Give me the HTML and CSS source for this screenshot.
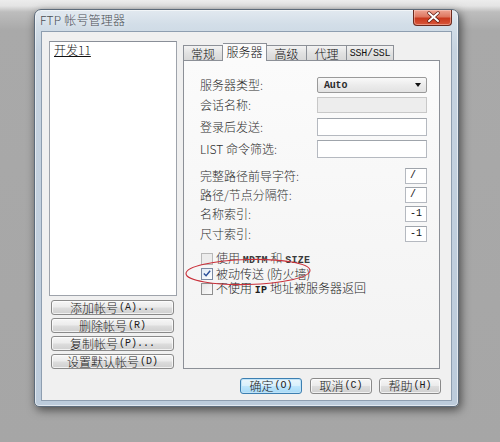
FILE: index.html
```html
<!DOCTYPE html>
<html lang="zh">
<head>
<meta charset="utf-8">
<title>FTP 帐号管理器</title>
<link rel="stylesheet" href="styles.css">
</head>
<body>
<div class="screen">
  <div class="window">
    <div class="titlebar">
      <span class="title">FTP 帐号管理器</span>
      <div class="close">
        <svg width="39" height="16" viewBox="0 0 39 16">
          <path d="M15 4 L24 12 M24 4 L15 12" stroke="#5a1a10" stroke-width="3.4" stroke-linecap="round"/>
          <path d="M15 4 L24 12 M24 4 L15 12" stroke="#ffffff" stroke-width="2" stroke-linecap="round"/>
        </svg>
      </div>
    </div>
    <div class="client">
      <div class="main">
        <div class="leftcol">
          <div class="listbox">
            <div class="item">开发11</div>
          </div>
          <div class="acct-btns">
            <div class="btn acct">添加帐号<span class="acc">(A)...</span></div>
            <div class="btn acct">删除帐号<span class="acc">(R)</span></div>
            <div class="btn acct">复制帐号<span class="acc">(P)...</span></div>
            <div class="btn acct">设置默认帐号<span class="acc">(D)</span></div>
          </div>
        </div>
        <div class="tabctl">
          <div class="tabs">
            <div class="tab t1">常规</div>
            <div class="tab sel">服务器</div>
            <div class="tab t3">高级</div>
            <div class="tab t4">代理</div>
            <div class="tab t5"><span class="mono">SSH/SSL</span></div>
          </div>
          <div class="panel">
            <div class="row first">
              <span class="lbl">服务器类型:</span>
              <div class="select"><span class="mono bold">Auto</span><span class="arrow"></span></div>
            </div>
            <div class="row r2">
              <span class="lbl">会话名称:</span>
              <div class="input disabled"></div>
            </div>
            <div class="row r3">
              <span class="lbl">登录后发送:</span>
              <div class="input tall"></div>
            </div>
            <div class="row r4">
              <span class="lbl">LIST 命令筛选:</span>
              <div class="input tall"></div>
            </div>
            <div class="row small s1">
              <span class="lbl">完整路径前导字符:</span>
              <div class="input mini">/</div>
            </div>
            <div class="row small s2">
              <span class="lbl">路径/节点分隔符:</span>
              <div class="input mini">/</div>
            </div>
            <div class="row small s3">
              <span class="lbl">名称索引:</span>
              <div class="input mini">-1</div>
            </div>
            <div class="row small s4">
              <span class="lbl">尺寸索引:</span>
              <div class="input mini">-1</div>
            </div>
            <div class="checks">
              <div class="check disabled"><span class="box"></span><span class="ctext">使用 <span class="cmono">MDTM</span> 和 <span class="cmono">SIZE</span></span></div>
              <div class="check"><span class="box checked">
                <svg width="11" height="11" viewBox="0 0 11 11"><path d="M2 5.5 L4.5 8 L9 2.5" stroke="#2b4f9a" stroke-width="1.6" fill="none"/></svg>
              </span><span class="ctext">被动传送 (防火墙)</span></div>
              <div class="check"><span class="box"></span><span class="ctext">不使用 <span class="cmono">IP</span> 地址被服务器返回</span></div>
            </div>
            <svg class="mark" width="255" height="307" viewBox="0 0 255 307">
              <ellipse cx="64" cy="211" rx="62" ry="12.5" fill="none" stroke="#c9303a" stroke-width="1.1" transform="rotate(-1.5 64 211)"/>
            </svg>
          </div>
        </div>
      </div>
      <div class="footer">
        <div class="btn foot default">确定<span class="acc">(O)</span></div>
        <div class="btn foot">取消<span class="acc">(C)</span></div>
        <div class="btn foot">帮助<span class="acc">(H)</span></div>
      </div>
    </div>
  </div>
</div>
</body>
</html>
```

FILE: styles.css
```css
html, body {
  margin: 0;
  padding: 0;
}
body {
  width: 500px;
  height: 442px;
  overflow: hidden;
  background: linear-gradient(#ececec 0px, #e4e4e4 6px, #bdbdbd 12px, #a9a9a9 30px, #a6a6a6 100%);
  font-family: "Noto Sans CJK SC", "Liberation Sans", sans-serif;
  font-size: 12px;
  font-weight: 300;
  color: #2a2a2a;
}
.screen {
  padding: 9px 0 0 34px;
}
.window {
  box-sizing: border-box;
  width: 425px;
  height: 398px;
  border: 1px solid #5d6b7a;
  border-radius: 7px 7px 5px 5px;
  background: linear-gradient(#e2e9f0 0px, #d3dee8 14px, #c6d3e0 40px, #bccbdb 100%);
  box-shadow: 2px 3px 10px rgba(0, 0, 0, 0.55), inset 0 0 0 1px rgba(255, 255, 255, 0.55);
  padding: 0 7px 6px 7px;
  display: flex;
  flex-direction: column;
}
.titlebar {
  height: 22px;
  margin: 0 -1px 0 -2px;
  display: flex;
  justify-content: space-between;
  align-items: flex-start;
}
.title {
  line-height: 20px;
  color: #4a4e55;
  font-size: 12px;
  text-shadow: 0 0 6px rgba(255, 255, 255, 0.9);
  letter-spacing: 0.2px;
}
.close {
  width: 39px;
  height: 16px;
  box-sizing: border-box;
  border: 1px solid #6b2a1e;
  border-top: none;
  border-radius: 0 0 4px 4px;
  background: linear-gradient(#efa594 0%, #de7760 45%, #c9391e 55%, #d9573a 100%);
  box-shadow: inset 0 0 0 1px rgba(255, 220, 210, 0.45);
}
.close svg {
  display: block;
  margin-top: -1px;
}
.client {
  height: 368px;
  background: #f0f0f0;
  box-shadow: 0 0 0 1px #8e9eb0;
  display: flex;
  flex-direction: column;
}
.main {
  display: flex;
  gap: 6px;
  padding: 9px 11px 0 7px;
}
.leftcol {
  width: 128px;
  display: flex;
  flex-direction: column;
}
.listbox {
  box-sizing: border-box;
  height: 255px;
  background: #ffffff;
  border: 1px solid #9ea3ab;
  border-top-color: #8a8f98;
  padding: 1px 4px;
}
.item {
  line-height: 14px;
  text-decoration: underline;
  text-decoration-thickness: 1px;
  text-underline-offset: 1px;
  color: #111;
}
.acct-btns {
  margin-top: 4px;
  padding: 0 3px 0 2px;
  display: flex;
  flex-direction: column;
  gap: 3px;
}
.btn {
  box-sizing: border-box;
  border: 1px solid #8a8a8a;
  border-radius: 3px;
  background: linear-gradient(#f6f6f6 0%, #ebebeb 48%, #dddddd 52%, #cfcfcf 100%);
  box-shadow: inset 0 0 0 1px rgba(255, 255, 255, 0.7);
  display: flex;
  align-items: center;
  justify-content: center;
  color: #1a1a1a;
  font-size: 12px;
}
.acct {
  height: 15px;
  line-height: 13px;
}
.acc {
  font-family: "Liberation Mono", monospace;
  font-size: 10px;
  margin-left: 1px;
}
.tabctl {
  width: 257px;
  display: flex;
  flex-direction: column;
}
.tabs {
  margin-top: 2px;
  height: 17px;
  display: flex;
  align-items: flex-end;
  position: relative;
  z-index: 2;
}
.tab {
  box-sizing: border-box;
  height: 15px;
  border: 1px solid #8c9097;
  border-bottom: none;
  border-left: none;
  background: linear-gradient(#f3f3f3, #e2e2e2 50%, #d8d8d8);
  display: flex;
  align-items: center;
  justify-content: center;
  line-height: 13px;
  color: #111;
}
.t1 {
  width: 40px;
  border-left: 1px solid #8c9097;
}
.sel {
  width: 44px;
  height: 18px;
  margin-bottom: -1px;
  background: #fbfbfb;
  border-left: none;
  padding-bottom: 2px;
}
.t3, .t4 {
  width: 40px;
}
.t5 {
  width: 47px;
}
.mono {
  font-family: "Liberation Mono", monospace;
  font-size: 10px;
  letter-spacing: -0.2px;
}
.bold {
  font-weight: bold;
}
.panel {
  position: relative;
  box-sizing: border-box;
  height: 309px;
  border: 1px solid #8c9097;
  background: linear-gradient(#fbfbfb, #f6f6f6 60%, #f3f3f3);
  padding: 16px 12px 0 16px;
}
.row {
  display: flex;
  justify-content: space-between;
  align-items: center;
}
.lbl {
  color: #2e2e2e;
  line-height: 14px;
}
.select {
  box-sizing: border-box;
  width: 110px;
  height: 16px;
  border: 1px solid #9a9a9a;
  border-radius: 2px;
  background: linear-gradient(#f9f9f9, #ececec 50%, #e2e2e2);
  display: flex;
  align-items: center;
  justify-content: space-between;
  padding: 0 5px 0 6px;
}
.arrow {
  width: 0;
  height: 0;
  border-left: 3.5px solid transparent;
  border-right: 3.5px solid transparent;
  border-top: 4px solid #111;
}
.input {
  box-sizing: border-box;
  width: 110px;
  height: 16px;
  border: 1px solid #b5b9c0;
  border-top-color: #9fa4ab;
  background: #ffffff;
}
.input.disabled {
  background: #ededed;
  border-color: #c8c8c8;
}
.input.tall {
  height: 18px;
}
.r2 {
  margin-top: 4px;
}
.r3 {
  margin-top: 5px;
}
.r4 {
  margin-top: 4px;
}
.small {
  height: 16px;
}
.s1 {
  margin-top: 10px;
}
.s2, .s3 {
  margin-top: 3px;
}
.s4 {
  margin-top: 4px;
}
.input.mini {
  width: 22px;
  height: 16px;
  font-family: "Liberation Mono", monospace;
  font-size: 10px;
  line-height: 14px;
  padding-left: 4px;
  color: #111;
}
.checks {
  margin-top: 9px;
  display: flex;
  flex-direction: column;
}
.check {
  height: 15px;
  display: flex;
  align-items: center;
  gap: 3px;
  padding-left: 1px;
}
.box {
  box-sizing: border-box;
  width: 12px;
  height: 12px;
  border: 1px solid #8f8f8f;
  background: linear-gradient(135deg, #e4e4e4, #fbfbfb);
  display: flex;
  align-items: center;
  justify-content: center;
}
.check.disabled .box {
  border-color: #b8b8b8;
  background: #ececec;
}
.box.checked {
  background: linear-gradient(135deg, #dfe9f5, #ffffff);
  border-color: #7b8aa3;
}
.ctext {
  line-height: 13px;
  color: #1e1e1e;
}
.cmono {
  font-family: "Liberation Mono", monospace;
  font-size: 10px;
  font-weight: bold;
  letter-spacing: 0.3px;
}
.check.disabled .ctext {
  color: #3a3a3a;
}
.mark {
  position: absolute;
  left: 0;
  top: 0;
  pointer-events: none;
}
.footer {
  margin-top: 9px;
  padding-right: 10px;
  display: flex;
  justify-content: flex-end;
  gap: 7px;
}
.foot {
  width: 62px;
  height: 16px;
  line-height: 14px;
}
.foot.default {
  margin-right: 1px;
  border-color: #3c7fb1;
  box-shadow: inset 0 0 0 1px #bfe3f8;
  background: linear-gradient(#eaf6fd 0%, #d9f0fc 48%, #bee6fd 52%, #a7d9f5 100%);
}
```
